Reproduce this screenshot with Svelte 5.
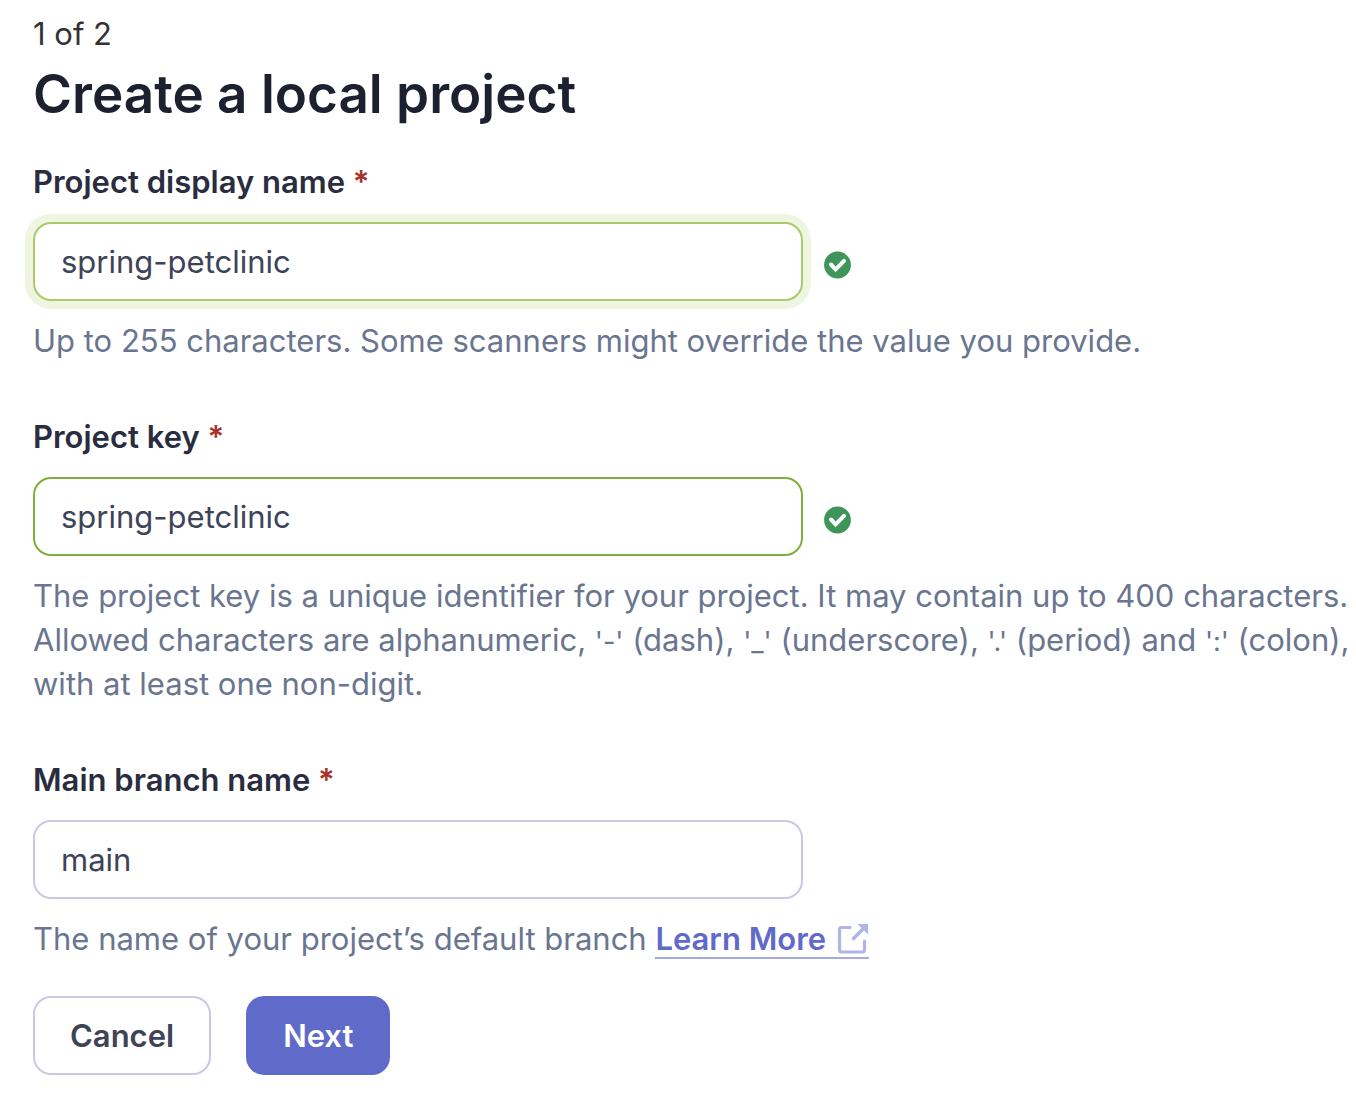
<script>
  let displayName = $state('spring-petclinic');
  let projectKey = $state('spring-petclinic');
  let branch = $state('main');
</script>

{#snippet check()}
  <svg class="check" viewBox="0 0 28 28" role="img" aria-label="Valid">
    <circle cx="13.5" cy="14" r="13.4" fill="#3f9559" />
    <path d="M7 13.500l4.600 4.800 8.400-8.400" fill="none" stroke="#fff" stroke-width="4" stroke-linecap="round" />
  </svg>
{/snippet}

<main>
  <p class="step">1 of 2</p>
  <h1>Create a local project</h1>
  <form onsubmit={(e) => e.preventDefault()}>
    <div class="field">
      <label for="name">Project display name <span class="req">*</span></label>
      <div class="row">
        <input id="name" class="valid focused" type="text" bind:value={displayName} />
        {@render check()}
      </div>
      <p class="note">Up to 255 characters. Some scanners might override the value you provide.</p>
    </div>
    <div class="field">
      <label for="key">Project key <span class="req">*</span></label>
      <div class="row">
        <input id="key" class="valid" type="text" bind:value={projectKey} />
        {@render check()}
      </div>
      <p class="note">
        The project key is a unique identifier for your project. It may contain up to 400 characters.
        Allowed characters are alphanumeric, <code>'-'</code> (dash), <code>'_'</code> (underscore),
        <code>'.'</code> (period) and <code>':'</code> (colon), with at least one non-digit.
      </p>
    </div>
    <div class="field last">
      <label for="branch">Main branch name <span class="req">*</span></label>
      <div class="row">
        <input id="branch" type="text" bind:value={branch} />
      </div>
      <p class="note">
        The name of your project’s default branch
        <a href="#learn">Learn More<svg class="ext" viewBox="0 0 32 32" aria-hidden="true">
            <path d="M13 4.500H4.500a2 2 0 0 0-2 2V27a2 2 0 0 0 2 2h21a2 2 0 0 0 2-2v-9" fill="none" stroke="currentColor" stroke-width="3.2" stroke-linecap="round" />
            <path d="M16.500 15.500L27 5" fill="none" stroke="currentColor" stroke-width="3.6" stroke-linecap="round" />
            <path d="M20.500 1h10.500v10.500z" fill="currentColor" />
          </svg></a>
      </p>
    </div>
    <div class="actions">
      <button type="button">Cancel</button>
      <button type="submit" class="primary">Next</button>
    </div>
  </form>
</main>

<style>
  :global(body) {
    background: #fff;
  }
  main {
    padding: 12px 0 40px 33px;
    font-family: Inter, 'Liberation Sans', sans-serif;
    font-size: 31px;
    line-height: 44px;
    color: #3e4357;
  }
  p,
  h1 {
    margin: 0;
  }
  .step {
    color: #333;
  }
  h1 {
    font-size: 53px;
    line-height: 72px;
    font-weight: 600;
    color: #1d212f;
    margin-top: 2px;
  }
  form {
    margin-top: 30px;
  }
  .field {
    margin-bottom: 52px;
  }
  .field.last {
    margin-bottom: 35px;
  }
  label {
    display: block;
    font-weight: 600;
    color: #2a2d40;
    margin-bottom: 18px;
  }
  .req {
    color: #a8322a;
  }
  .row {
    display: flex;
    align-items: center;
    gap: 21px;
    margin-bottom: 18px;
  }
  input {
    box-sizing: border-box;
    width: 770px;
    height: 79px;
    padding: 0 26px;
    border: 2px solid #c9cae0;
    border-radius: 18px;
    font: inherit;
    color: inherit;
    background: #fff;
    outline: none;
  }
  input.valid {
    border-color: #7fae3a;
  }
  input.focused {
    border-color: #a9cb6c;
    box-shadow: 0 0 0 8px #eff5e1;
  }
  .check {
    width: 28px;
    height: 28px;
    margin-top: 6px;
  }
  .note {
    color: #6a7590;
  }
  code {
    font-family: inherit;
    font-size: 27px;
    line-height: 1;
  }
  a {
    color: #5f6ac9;
    font-weight: 600;
    text-decoration: none;
    border-bottom: 2px solid #a4a9e0;
  }
  .ext {
    width: 32px;
    height: 32px;
    margin-left: 11px;
    vertical-align: -5px;
    color: #b0b5e8;
  }
  .actions {
    display: flex;
    gap: 35px;
  }
  button {
    height: 79px;
    padding: 0 35px;
    border: 2px solid #c9cae0;
    border-radius: 18px;
    background: #fff;
    font: inherit;
    font-weight: 600;
    color: #3e4357;
  }
  .primary {
    border-color: #5f6ac9;
    background: #5f6ac9;
    color: #fff;
  }
</style>
